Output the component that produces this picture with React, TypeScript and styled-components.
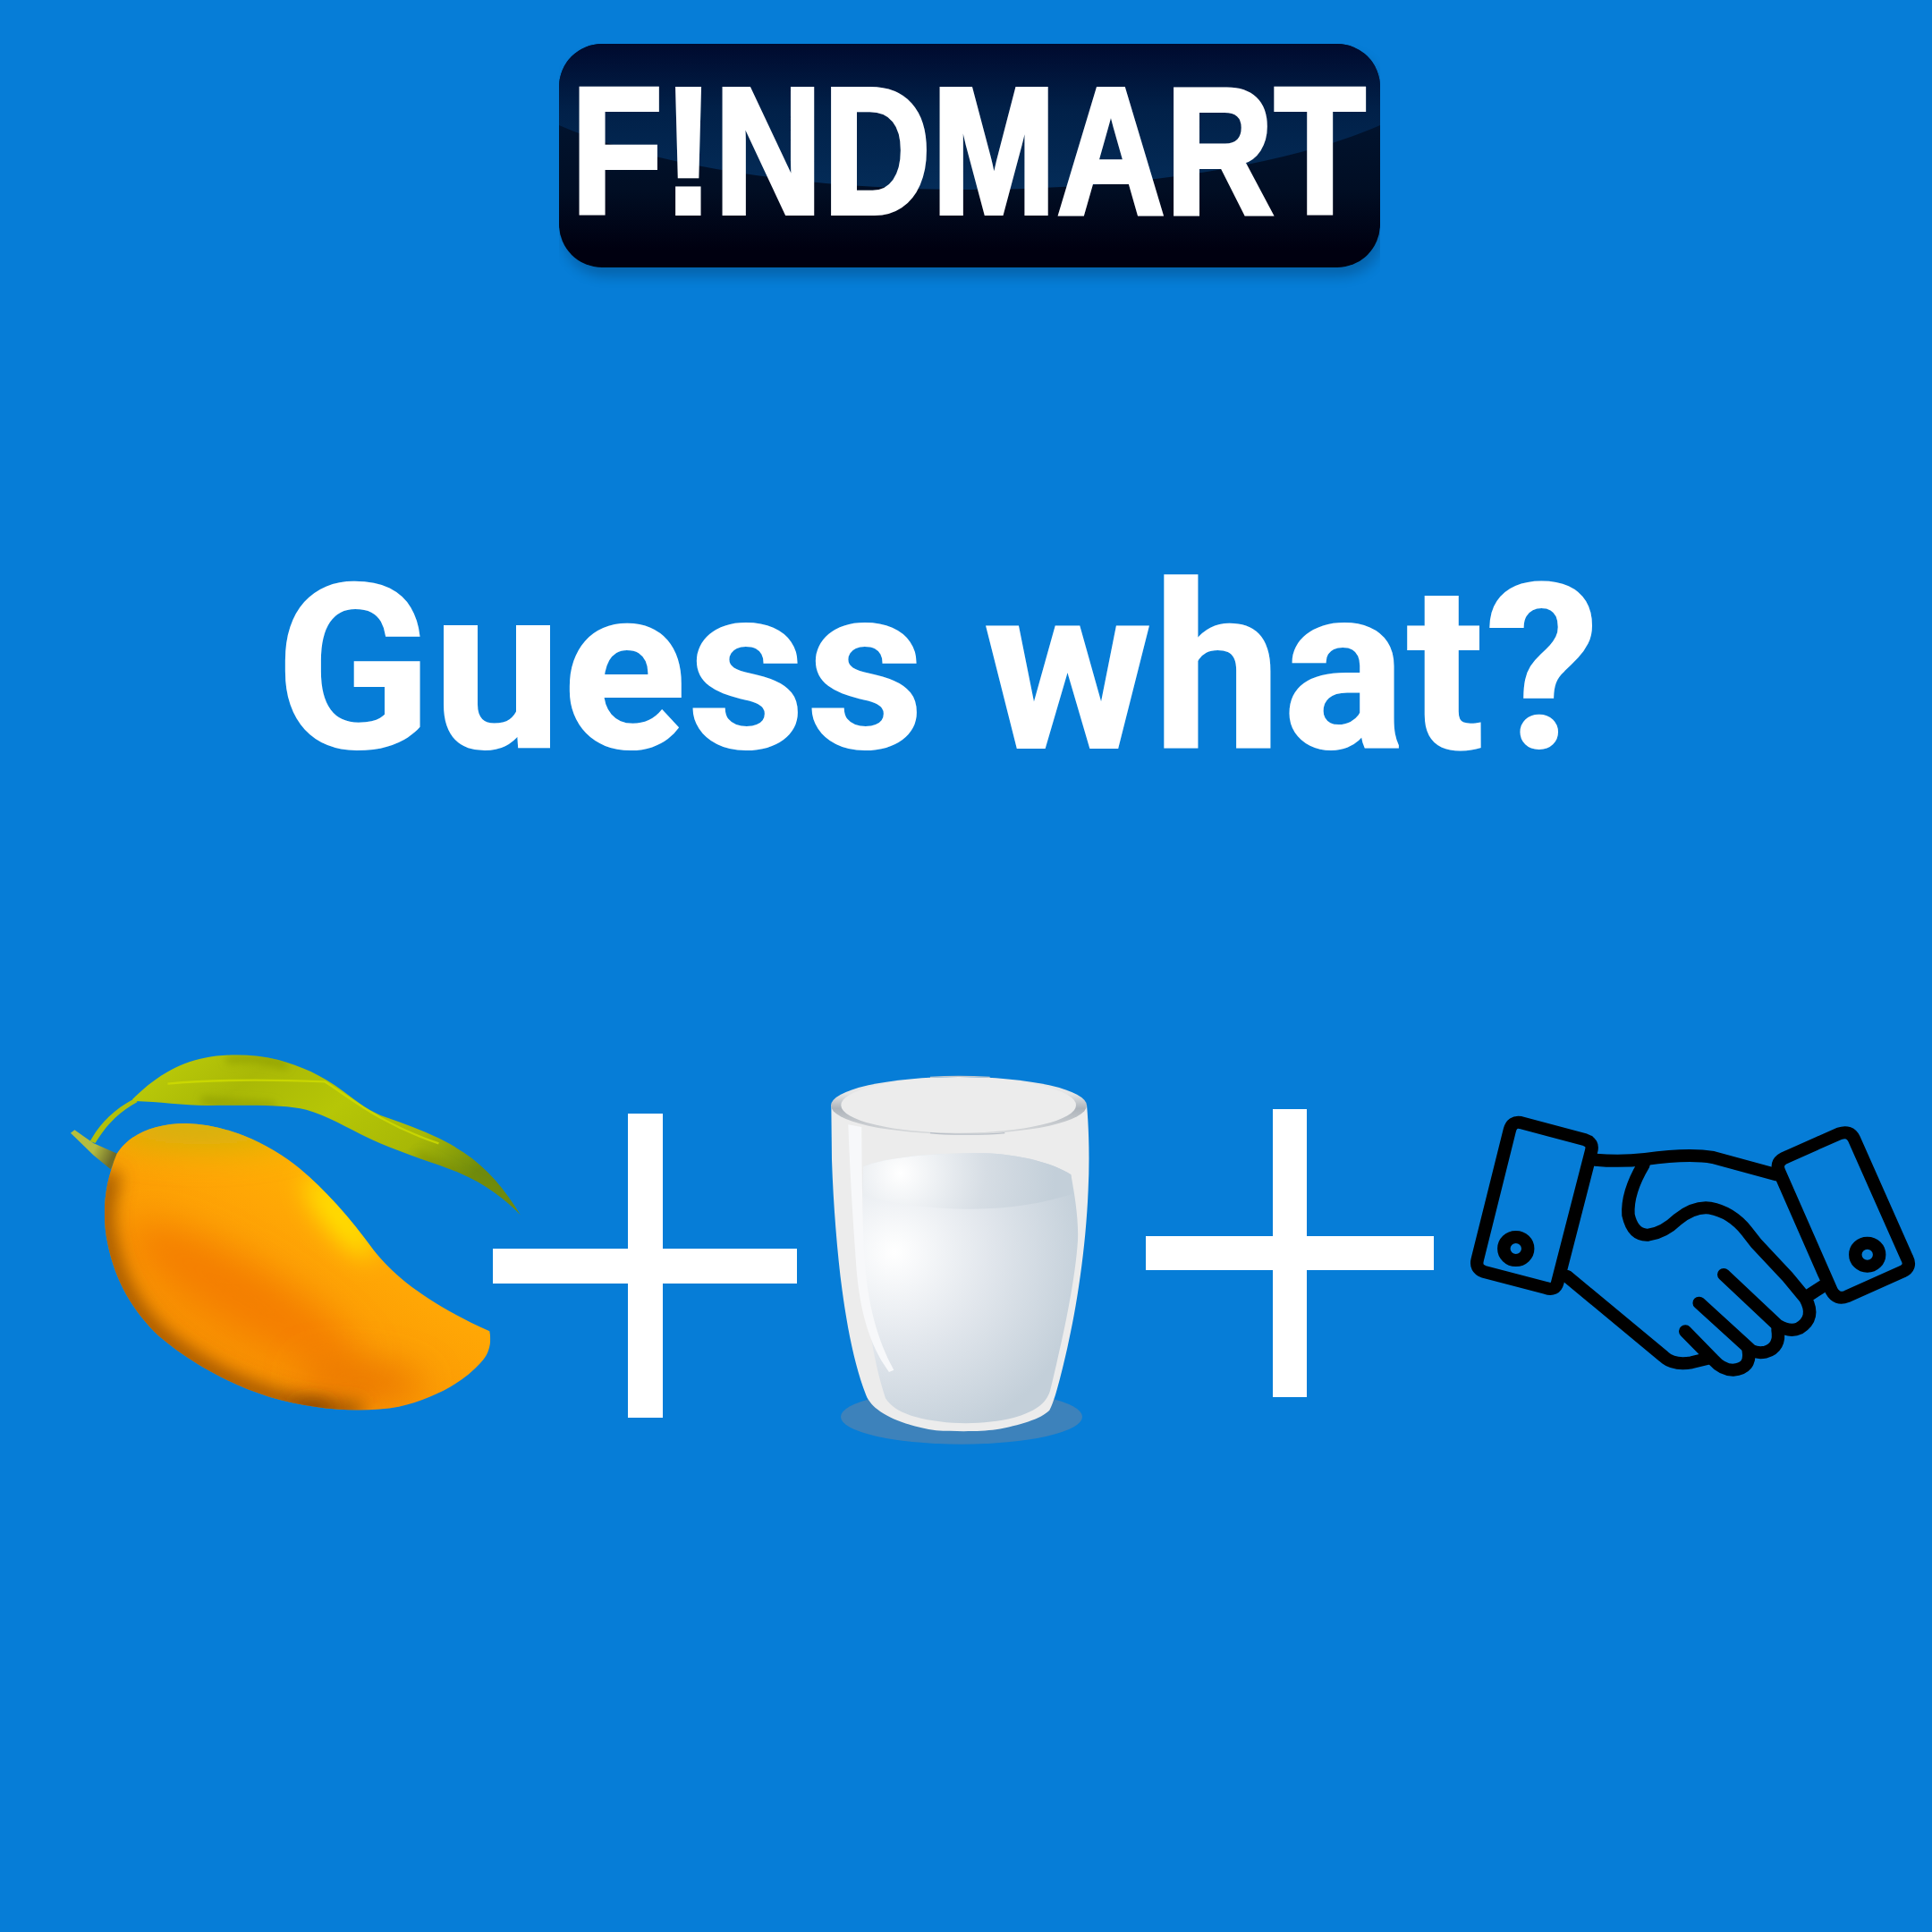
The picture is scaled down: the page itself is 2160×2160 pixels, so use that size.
import React from 'react';
import styled, { createGlobalStyle } from 'styled-components';

const GlobalStyle = createGlobalStyle`
  html, body {
    margin: 0;
    padding: 0;
    background: #067dd7;
  }
`;

const Page = styled.div`
  width: 2160px;
  height: 2160px;
  overflow: hidden;
  background: #067dd7;
  display: flex;
  flex-direction: column;
  align-items: center;
  padding-top: 49px;
  box-sizing: border-box;
  font-family: Roboto, "Liberation Sans", sans-serif;
`;

const LogoClip = styled.div`
  width: 918px;
  margin-left: 8px;
  padding-bottom: 28px;
  overflow: hidden;
  flex: none;
`;

const LogoBox = styled.div`
  position: relative;
  height: 250px;
  border-radius: 48px;
  box-shadow: 4px 10px 14px rgba(0, 0, 0, 0.2);
  background: linear-gradient(180deg, #01132e 35%, #010e24 65%, #000010 92%);
  display: flex;
  align-items: center;
  padding: 0 0 10px 14px;
  box-sizing: border-box;
  overflow: hidden;

  /* the gloss over the top half of the button */
  &::before {
    content: "";
    position: absolute;
    left: -94px;
    top: -163px;
    width: 1106px;
    height: 326px;
    border-radius: 50%;
    background: linear-gradient(180deg, #000a2e 50%, #012048 72%, #042c58 100%);
  }
`;

const LogoText = styled.div`
  position: relative;
  color: #fff;
  font-family: "Liberation Sans", Arial, sans-serif;
  font-size: 200px;
  font-weight: 700;
  font-kerning: none;
  letter-spacing: 2px;
  line-height: 1;
  -webkit-text-stroke: 6px #fff;
  white-space: nowrap;
  transform: scaleX(0.83);
  transform-origin: left center;
`;

const Headline = styled.h1`
  align-self: flex-start;
  margin: 294px 0 0 308px;
  color: #fff;
  font-size: 256px;
  font-weight: 700;
  line-height: 1;
  letter-spacing: 1.5px;
  -webkit-text-stroke: 2px #fff;
  white-space: nowrap;
`;

const Equation = styled.div`
  align-self: stretch;
  display: flex;
  align-items: flex-start;
  margin-top: 273px;
  padding-left: 60px;
`;

const Art = styled.svg<{ $left?: number; $top?: number }>`
  display: block;
  flex: none;
  margin-left: ${(p) => p.$left ?? 0}px;
  margin-top: ${(p) => p.$top ?? 0}px;
`;

const Plus = styled.div<{ $size: number; $bar: number; $left: number; $top: number }>`
  flex: none;
  width: ${(p) => p.$size}px;
  height: ${(p) => p.$size}px;
  margin-left: ${(p) => p.$left}px;
  margin-top: ${(p) => p.$top}px;
  background:
    linear-gradient(#fff, #fff) center / ${(p) => p.$bar}px 100% no-repeat,
    linear-gradient(#fff, #fff) center / 100% ${(p) => p.$bar}px no-repeat;
`;

const leafOutline =
  'M255 238C320 170 400 115 490 98C560 84 650 84 730 105C800 125 870 155 940 210C990 250 1030 280 1080 298C1170 330 1260 365 1330 415C1410 470 1465 540 1515 625C1470 575 1400 520 1320 485C1250 455 1150 425 1060 385C980 350 900 295 820 272C740 252 620 258 500 258C420 258 340 245 265 243Z';

const Mango = () => (
  <Art $left={0} $top={0} width={540} height={480} viewBox="0 0 1568 1440" preserveAspectRatio="none">
    <defs>
      <clipPath id="fruitClip">
        <path d="M205 420C240 360 320 318 430 318C560 320 700 385 800 470C880 540 960 630 1040 745C1110 835 1220 925 1415 1015C1422 1050 1415 1085 1395 1110C1340 1180 1240 1240 1120 1268C1000 1290 850 1280 700 1235C560 1190 430 1110 340 1030C260 950 200 850 175 720C155 620 165 520 205 420Z" />
      </clipPath>
      <clipPath id="leafClip">
        <path d={leafOutline} />
      </clipPath>
      <linearGradient id="fruitBase" x1="0.75" y1="0.2" x2="0.3" y2="0.85">
        <stop offset="0" stopColor="#ffc000" />
        <stop offset="0.45" stopColor="#ffa605" />
        <stop offset="1" stopColor="#f58a00" />
      </linearGradient>
      <linearGradient id="leafFill" x1="0" y1="0" x2="1" y2="0.5">
        <stop offset="0" stopColor="#c0d00a" />
        <stop offset="0.3" stopColor="#a9b806" />
        <stop offset="0.55" stopColor="#b6c606" />
        <stop offset="0.8" stopColor="#a8b806" />
        <stop offset="1" stopColor="#6f8a0c" />
      </linearGradient>
      <linearGradient id="stalkFill" x1="0" y1="0" x2="1" y2="0.4">
        <stop offset="0" stopColor="#b8bf3c" />
        <stop offset="0.6" stopColor="#b4bb40" />
        <stop offset="1" stopColor="#6f6d2a" />
      </linearGradient>
      <filter id="blurWide" filterUnits="userSpaceOnUse" x="0" y="0" width="1568" height="1440">
        <feGaussianBlur stdDeviation="60" />
      </filter>
      <filter id="blurMid" filterUnits="userSpaceOnUse" x="0" y="0" width="1568" height="1440">
        <feGaussianBlur stdDeviation="40" />
      </filter>
      <filter id="blurEdge" filterUnits="userSpaceOnUse" x="0" y="0" width="1568" height="1440">
        <feGaussianBlur stdDeviation="30" />
      </filter>
      <filter id="blurVein" filterUnits="userSpaceOnUse" x="0" y="0" width="1568" height="1440">
        <feGaussianBlur stdDeviation="14" />
      </filter>
    </defs>
    <path d="M118 378C150 320 190 275 262 235L272 246C210 280 170 325 135 384Z" fill="#b0c00c" />
    <path d="M55 350L68 340L130 385L208 420L185 472L130 425Z" fill="url(#stalkFill)" />
    <path d={leafOutline} fill="url(#leafFill)" />
    <g clipPath="url(#leafClip)">
      <path d="M480 240C560 255 640 250 720 262M560 105C620 95 690 100 760 125M1180 425C1240 450 1320 490 1420 560" fill="none" stroke="#7f9004" strokeOpacity="0.5" strokeWidth="28" filter="url(#blurVein)" />
      <path d="M370 185C500 172 680 170 880 178C960 230 1060 320 1250 385" fill="none" stroke="#cfdc00" strokeWidth="7" strokeOpacity="0.8" />
    </g>
    <g clipPath="url(#fruitClip)">
      <rect width="1568" height="1440" fill="url(#fruitBase)" />
      <ellipse cx="480" cy="330" rx="300" ry="60" fill="#c9b40f" filter="url(#blurWide)" />
      <ellipse cx="930" cy="630" rx="55" ry="170" transform="rotate(-38 930 630)" fill="#ffe100" filter="url(#blurMid)" />
      <ellipse cx="620" cy="900" rx="430" ry="110" transform="rotate(32 620 900)" fill="#f27800" fillOpacity="0.8" filter="url(#blurWide)" />
      <ellipse cx="1000" cy="1180" rx="200" ry="60" transform="rotate(6 1000 1180)" fill="#e66e00" fillOpacity="0.85" filter="url(#blurWide)" />
      <path d="M190 480C155 600 160 660 175 720C200 850 260 950 340 1030C430 1110 560 1190 700 1235C800 1270 900 1285 1000 1282" fill="none" stroke="#8f4a00" strokeWidth="58" strokeOpacity="0.9" filter="url(#blurEdge)" />
      <ellipse cx="840" cy="1270" rx="70" ry="22" fill="#6f3600" fillOpacity="0.8" filter="url(#blurEdge)" />
    </g>
  </Art>
);

const Glass = () => (
  <Art $left={9} $top={30} width={340} height={450} viewBox="0 0 1020 1350">
    <defs>
      <radialGradient id="milkBody" gradientUnits="userSpaceOnUse" cx="300" cy="660" r="720">
        <stop offset="0" stopColor="#ffffff" />
        <stop offset="0.45" stopColor="#e1e6ec" />
        <stop offset="0.9" stopColor="#c3cfd9" />
        <stop offset="1" stopColor="#c3cfd9" />
      </radialGradient>
      <radialGradient id="milkTop" gradientUnits="userSpaceOnUse" cx="320" cy="395" r="520">
        <stop offset="0" stopColor="#ffffff" />
        <stop offset="0.55" stopColor="#d6dde4" />
        <stop offset="1" stopColor="#c3cfd9" />
      </radialGradient>
      <linearGradient id="rim" x1="0" y1="0" x2="0" y2="1">
        <stop offset="0" stopColor="#ececec" />
        <stop offset="0.3" stopColor="#e4e5e6" />
        <stop offset="0.55" stopColor="#aeb4bb" />
        <stop offset="1" stopColor="#d8dadc" />
      </linearGradient>
    </defs>
    <ellipse cx="525" cy="1212" rx="405" ry="92" fill="#3d82bb" />
    <path d="M88 165L90 350C95 500 108 660 125 790C140 900 165 1040 205 1140C225 1190 300 1235 440 1258C510 1262 590 1262 640 1255C720 1240 790 1220 820 1190C835 1165 855 1090 880 980C910 850 942 650 950 450C955 350 952 240 945 165Z" fill="#ececec" />
    <ellipse cx="516" cy="168" rx="429" ry="96" fill="url(#rim)" />
    <ellipse cx="515" cy="167" rx="394" ry="93" fill="#ececec" />
    <path d="M195 372C300 335 450 328 600 328C720 332 830 360 892 400C905 470 918 550 915 620C905 780 850 1010 822 1125C808 1170 770 1195 700 1215C600 1240 470 1240 370 1212C320 1198 290 1180 270 1150C230 1030 205 870 198 700C192 590 192 480 195 372Z" fill="url(#milkBody)" />
    <path d="M195 372C300 335 450 328 600 328C720 332 830 360 892 400L897 465C800 495 690 515 560 515C420 515 280 495 195 470Z" fill="url(#milkTop)" />
    <path d="M145 232L190 240C190 360 192 480 197 640C205 820 240 950 298 1055L282 1062C215 970 180 850 170 680C160 540 150 380 145 232Z" fill="#f7f8fa" />
    <path d="M420 260C470 266 610 266 670 260" fill="none" stroke="#b8bec6" strokeWidth="4" />
    <path d="M420 73C470 70 560 70 620 73" fill="none" stroke="#c2c6cb" strokeWidth="4" />
  </Art>
);

const Handshake = () => (
  <Art $left={16} $top={80} width={540} height={330} viewBox="0 0 1568 990" preserveAspectRatio="none">
    <g fill="none" stroke="#000" strokeWidth="42" strokeLinecap="round" strokeLinejoin="round">
      <path d="M235 75L445 133Q472 142 465 170L355 612Q348 640 318 630L115 575Q88 565 95 535L200 100Q208 70 235 75Z" />
      <circle cx="220" cy="498" r="39" />
      <path d="M1100 190L1270 112Q1305 100 1318 130L1490 530Q1505 560 1475 575L1295 658Q1262 672 1245 640L1075 240Q1060 205 1100 190Z" />
      <circle cx="1361" cy="518" r="39" />
      <path d="M478 200Q560 208 640 198Q780 178 860 192L1065 250" />
      <path d="M635 215Q580 310 585 385Q600 455 650 452Q700 445 745 400Q800 355 850 362Q920 375 970 440L1000 480L1100 590L1160 665Q1195 730 1140 765Q1110 780 1070 755L895 585" />
      <path d="M1070 770Q1080 830 1030 845Q1005 850 985 840L815 680" />
      <path d="M975 840Q985 900 925 905Q890 905 860 870L770 775" />
      <path d="M385 590L700 860Q730 890 790 880L850 865" />
      <path d="M1170 655L1215 625" />
    </g>
  </Art>
);

const App: React.FC = () => (
  <Page>
    <GlobalStyle />
    <LogoClip>
      <LogoBox>
        <LogoText>F!NDMART</LogoText>
      </LogoBox>
    </LogoClip>
    <Headline>Guess what?</Headline>
    <Equation>
      <Mango />
      <Plus $size={340} $bar={39} $left={-49} $top={95} />
      <Glass />
      <Plus $size={322} $bar={38} $left={41} $top={90} />
      <Handshake />
    </Equation>
  </Page>
);

export default App;
